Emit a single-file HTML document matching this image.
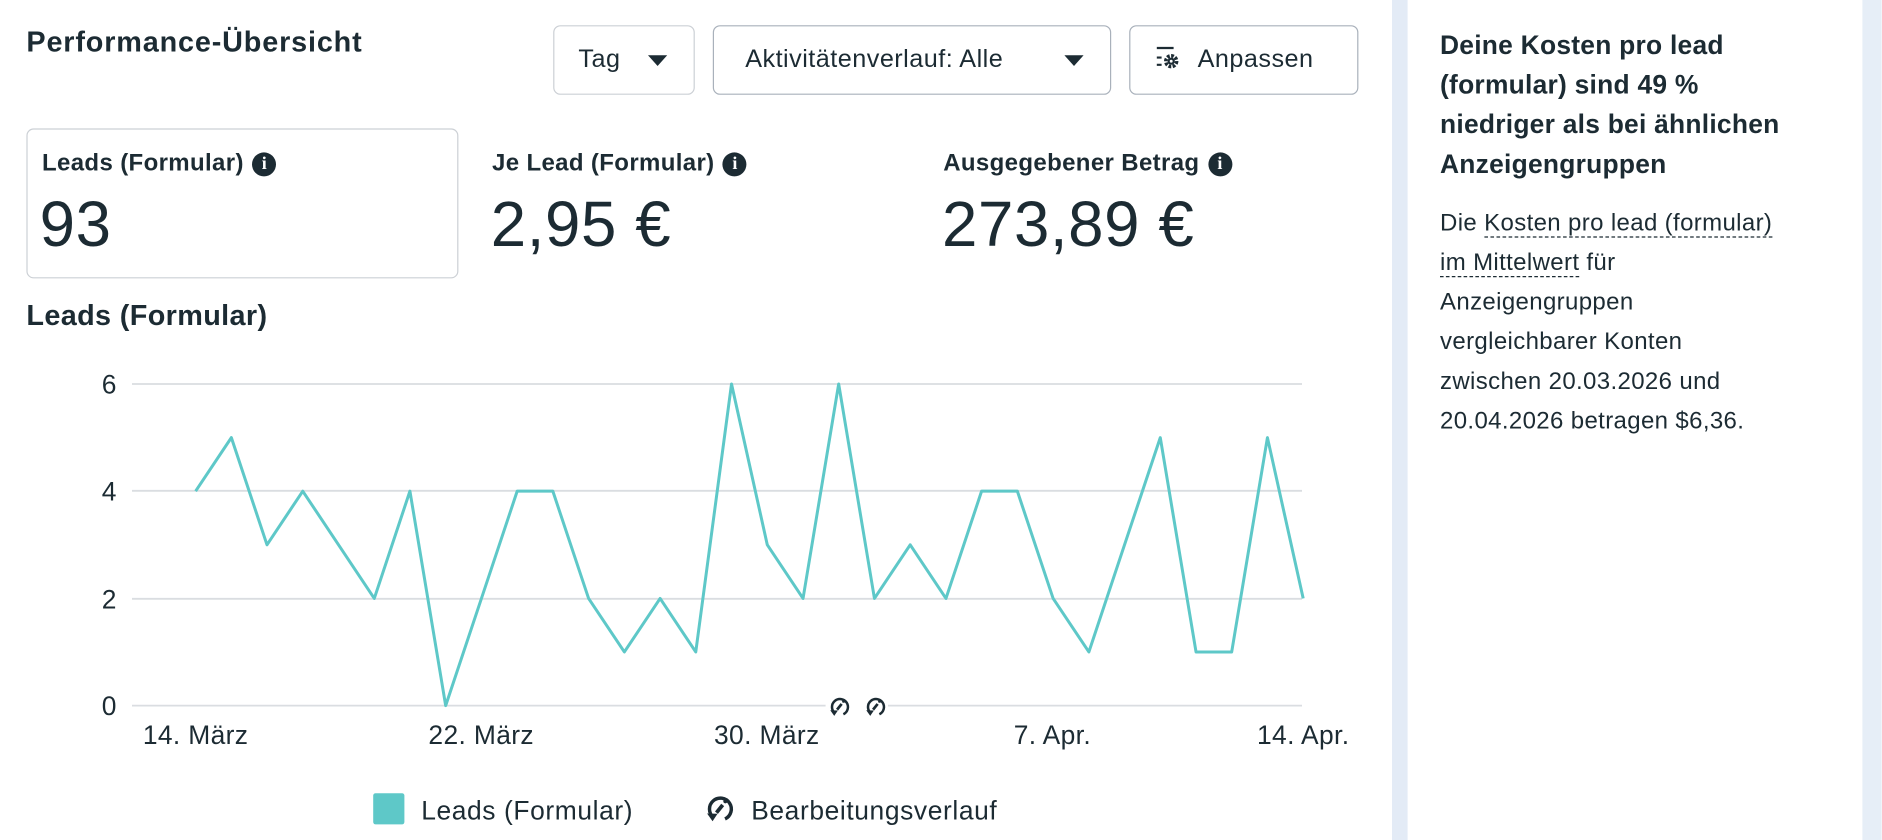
<!DOCTYPE html>
<html><head><meta charset="utf-8">
<style>
html,body{margin:0;padding:0;width:1882px;height:840px;overflow:hidden;background:#fff}
#wrap{width:1568px;height:700px;transform:scale(1.2);transform-origin:0 0;position:relative;font-family:"Liberation Sans",sans-serif;color:#1c2b33}
.abs{position:absolute;white-space:nowrap}
.btn{position:absolute;top:21px;height:58px;border:1.5px solid #b9c0c9;border-radius:6px;box-sizing:border-box;font-size:21px;letter-spacing:0.4px;line-height:56px;background:#fff}
.lbl{font-weight:bold;font-size:20px;letter-spacing:0.3px}
.val{font-size:53px;letter-spacing:0.5px}
.tri{display:inline-block;width:0;height:0;border-left:8px solid transparent;border-right:8px solid transparent;border-top:9px solid #1c2b33;vertical-align:middle;position:absolute;top:24px}
.info{display:inline-block;width:20px;height:20px;border-radius:50%;background:#1c2b33;color:#fff;font-size:15px;line-height:20px;text-align:center;font-weight:bold;font-family:"Liberation Serif",serif;margin-left:7px;vertical-align:1px;letter-spacing:0}
.dot{border-bottom:1.5px dashed #1c2b33}
</style></head><body><div id="wrap">
<div class="abs" style="left:22px;top:22px;font-size:24px;font-weight:bold;letter-spacing:0.7px">Performance-Übersicht</div>

<div class="btn" style="left:461px;width:118px;padding-left:20px;border-color:#ccd0d5">Tag<span class="tri" style="left:78px"></span></div>
<div class="btn" style="left:594px;width:332px;padding-left:26px;border-color:#a9b1bb">Aktivitätenverlauf: Alle<span class="tri" style="left:292px"></span></div>
<div class="btn" style="left:941px;width:191px;padding-left:20px;border-color:#a9b1bb">
<svg width="26" height="22" viewBox="0 0 26 22" style="vertical-align:middle;position:relative;top:-2px;margin-right:10px"><path d="M2 3h14M2 11h4M2 17h4" stroke="#1c2b33" stroke-width="1.8"/><circle cx="14" cy="14" r="4.5" fill="none" stroke="#1c2b33" stroke-width="3" stroke-dasharray="2.3 1.2"/><circle cx="14" cy="14" r="3" fill="#1c2b33"/><circle cx="14" cy="14" r="1.2" fill="#fff"/></svg>Anpassen</div>

<div class="abs" style="left:22px;top:107px;width:360px;height:125px;border:1.5px solid #ccd0d5;border-radius:6px;box-sizing:border-box"></div>
<div class="abs lbl" style="left:35px;top:125px">Leads (Formular)<span class="info">i</span></div>
<div class="abs val" style="left:33px;top:157px">93</div>
<div class="abs lbl" style="left:410px;top:125px">Je Lead (Formular)<span class="info">i</span></div>
<div class="abs val" style="left:409px;top:157px">2,95 €</div>
<div class="abs lbl" style="left:786px;top:125px">Ausgegebener Betrag<span class="info">i</span></div>
<div class="abs val" style="left:785px;top:157px">273,89 €</div>

<div class="abs" style="left:22px;top:250px;font-size:24px;font-weight:bold;letter-spacing:0.3px">Leads (Formular)</div>

<svg class="abs" style="left:0;top:0" width="1160" height="700">
<defs><g id="hist"><path d="M-3.5 5.5A7 7 0 1 1 4 6.5" fill="none" stroke="#1c2b33" stroke-width="2.2"/><path d="M-7.5 3l3.5 5 3.2-4.8z" fill="#1c2b33"/><path d="M-1.5 2.5l4-5" stroke="#1c2b33" stroke-width="2.4"/><circle cx="4.2" cy="-4.8" r="1.3" fill="#1c2b33"/></g></defs>
<g stroke="#dadde1" stroke-width="1.5">
<line x1="110" y1="320" x2="1085" y2="320"/><line x1="110" y1="409" x2="1085" y2="409"/><line x1="110" y1="499" x2="1085" y2="499"/><line x1="110" y1="588" x2="1085" y2="588"/></g>
<g font-family="Liberation Sans" font-size="22" fill="#1c2b33" text-anchor="end">
<text x="97" y="328">6</text><text x="97" y="417">4</text><text x="97" y="507">2</text><text x="97" y="596">0</text></g>
<g font-family="Liberation Sans" font-size="22" fill="#1c2b33" text-anchor="middle" letter-spacing="0.3">
<text x="163" y="620">14. März</text><text x="401" y="620">22. März</text><text x="639" y="620">30. März</text><text x="877" y="620">7. Apr.</text><text x="1086" y="620">14. Apr.</text></g>
<polyline fill="none" stroke="#5ec8c8" stroke-width="2.5" stroke-linejoin="round" points="163,409.3 192.8,364.7 222.5,454 252.3,409.3 282.1,454 311.9,498.7 341.6,409.3 371.4,588 401.2,498.7 431,409.3 460.7,409.3 490.5,498.7 520.3,543.3 550.1,498.7 579.8,543.3 609.6,320 639.4,454 669.2,498.7 698.9,320 728.7,498.7 758.5,454 788.3,498.7 818,409.3 847.8,409.3 877.6,498.7 907.4,543.3 937.1,454 966.9,364.7 996.7,543.3 1026.4,543.3 1056.2,364.7 1086,498.7"/>
<rect x="688" y="578" width="52" height="20" fill="#fff"/>
<use href="#hist" transform="translate(699,589) scale(0.95)"/>
<use href="#hist" transform="translate(729,589) scale(0.95)"/>
<rect x="311" y="661" width="26" height="26" rx="2" fill="#5ec8c8"/>
<text x="351" y="683" font-family="Liberation Sans" font-size="22" letter-spacing="0.5" fill="#1c2b33">Leads (Formular)</text>
<use href="#hist" transform="translate(599,674) scale(1.3)"/>
<text x="626" y="683" font-family="Liberation Sans" font-size="22" letter-spacing="0.5" fill="#1c2b33">Bearbeitungsverlauf</text>
</svg>

<div class="abs" style="left:1160px;top:0;width:13px;height:700px;background:#e3ebf6"></div>
<div class="abs" style="left:1552px;top:0;width:16px;height:700px;background:#e6eef7"></div>
<div class="abs" style="left:1200px;top:21px;font-size:22px;font-weight:bold;line-height:33px;letter-spacing:0.2px">Deine Kosten pro lead<br>(formular) sind 49 %<br>niedriger als bei ähnlichen<br>Anzeigengruppen</div>
<div class="abs" style="left:1200px;top:170px;font-size:20px;line-height:33px;letter-spacing:0.3px">Die <span class="dot">Kosten pro lead (formular)</span><br><span class="dot">im Mittelwert</span> für<br>Anzeigengruppen<br>vergleichbarer Konten<br>zwischen 20.03.2026 und<br>20.04.2026 betragen $6,36.</div>
</div></body></html>
